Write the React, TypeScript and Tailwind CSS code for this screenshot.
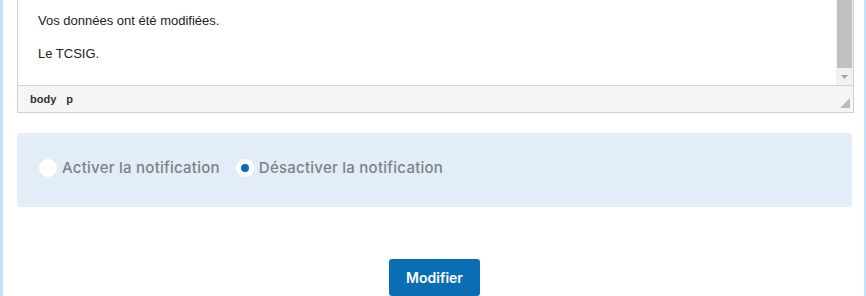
import React from 'react';

function Radio({ checked, label }: { checked: boolean; label: string }) {
  return (
    <label className="flex items-center gap-[5px] cursor-pointer">
      <span className="w-[18px] h-[18px] rounded-full bg-white flex items-center justify-center">
        {checked && <span className="w-[8px] h-[8px] rounded-full bg-[#0b6db3]" />}
      </span>
      <span className="text-[15px] leading-[18px] font-medium tracking-[0.25px] text-[#7d8187] pb-[1px] [font-family:Inter,sans-serif]">{label}</span>
    </label>
  );
}

export default function App() {
  return (
    <div className="w-[866px] h-[296px] overflow-hidden bg-[#c2e1fc] pl-[3px] pr-[2px]">
      <div className="h-full bg-white pl-[14px] pr-[11px]">
        {/* editor */}
        <div className="border border-t-0 border-[#d1d1d1] w-[837px]">
          <div className="relative h-[85px] bg-white flex">
            <div className="flex-1 pl-[20px] pt-[11px] text-[13px] leading-[20px] text-[#222] [font-family:'Liberation_Sans',Arial,sans-serif]">
              <p>Vos données ont été modifiées.</p>
              <p className="mt-[13px]">Le TCSIG.</p>
            </div>
            <div className="w-[17px] h-full bg-[#f1f1f1] flex flex-col items-center">
              <div className="w-[15px] h-[68px] bg-[#c1c1c1]" />
              <div className="flex-1 flex items-center justify-center">
                <svg width="7" height="4" viewBox="0 0 7 4">
                  <path d="M0 0h7L3.5 4z" fill="#a3a3a3" />
                </svg>
              </div>
            </div>
          </div>
          <div className="h-[27px] border-t border-[#d1d1d1] bg-[#f5f5f5] flex items-center pl-[12px] pr-[3px] gap-[10px] text-[11px] font-bold text-[#333] [font-family:'Liberation_Sans',Arial,sans-serif]">
            <span>body</span>
            <span>p</span>
            <span className="flex-1" />
            <svg width="10" height="10" viewBox="0 0 10 10" className="mt-[8px]">
              <path d="M10 0V10H0z" fill="#bbbbbb" />
            </svg>
          </div>
        </div>

        {/* notification panel */}
        <div className="mt-[20px] w-[835px] h-[74px] rounded-[4px] bg-[#e3edf7] flex items-center pl-[22px] pb-[4px] gap-[16px]">
          <Radio checked={false} label="Activer la notification" />
          <Radio checked={true} label="Désactiver la notification" />
        </div>

        <div className="flex justify-center mt-[52px] w-[835px]">
          <button className="w-[91px] h-[37px] rounded-[3px] bg-[#0b6db3] text-white text-[14px] font-semibold [font-family:Inter,sans-serif]">
            Modifier
          </button>
        </div>
      </div>
    </div>
  );
}
